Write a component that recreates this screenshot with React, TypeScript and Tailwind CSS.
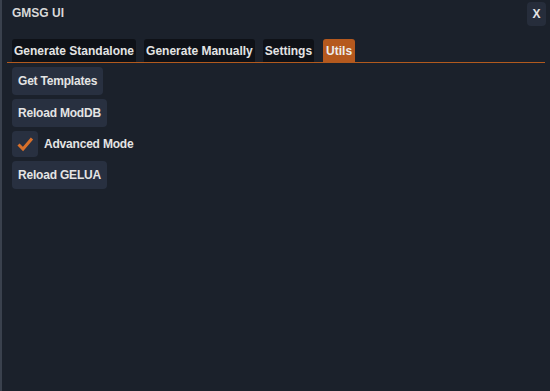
const tabs = ["Generate Standalone", "Generate Manually", "Settings", "Utils"];

function Btn({ label }: { label: string }) {
  return (
    <button className="flex h-[28px] items-center rounded-[4px] bg-[#283040] px-[6px] text-[12px] font-bold tracking-[-0.2px] text-[#e4e4e4]">
      {label}
    </button>
  );
}

export default function App() {
  return (
    <div
      className="relative h-[391px] w-[550px] overflow-hidden border-l-[2px] border-[#3a414d] bg-[#1b212b] text-[#e4e4e4]"
      style={{ fontFamily: '"Liberation Sans", Arial, sans-serif' }}
    >
      <div className="flex h-[26px] items-center justify-between pl-[10px] pr-[4px]">
        <span className="text-[12px] font-bold text-[#d8d8d8]">GMSG UI</span>
        <button className="mt-[2px] flex h-[24px] w-[19px] items-center justify-center rounded-[4px] bg-[#262d3b] text-[12px] font-bold text-[#e4e4e4]">
          X
        </button>
      </div>
      <div className="mt-[13px] ml-[5px] mr-[5px] flex gap-[8px] border-b border-[#b25a1e] pl-[5px]">
        {tabs.map((t) => (
          <div
            key={t}
            className={
              t === "Utils"
                ? "ml-[1px] flex h-[23px] items-center rounded-t-[3px] bg-[#b5591e] px-[3px] text-[12px] font-bold text-[#ececec]"
                : "flex h-[23px] items-center rounded-t-[3px] bg-[#0e1117] px-[2px] text-[12px] font-bold text-[#e4e4e4]"
            }
          >
            {t}
          </div>
        ))}
      </div>
      <div className="flex flex-col items-start gap-[4px] pl-[10px] pt-[4px]">
        <Btn label="Get Templates" />
        <Btn label="Reload ModDB" />
        <div className="flex items-center gap-[6px]">
          <div className="flex h-[26px] w-[26px] items-center justify-center rounded-[4px] bg-[#283040]">
            <svg width="18" height="18" viewBox="0 0 18 18">
              <path d="M2.5 9.5 L7 14 L16 3.5" fill="none" stroke="#d8702a" strokeWidth="3" strokeLinecap="butt" strokeLinejoin="miter" />
            </svg>
          </div>
          <span className="text-[12px] font-bold tracking-[-0.2px] text-[#e4e4e4]">Advanced Mode</span>
        </div>
        <Btn label="Reload GELUA" />
      </div>
    </div>
  );
}
